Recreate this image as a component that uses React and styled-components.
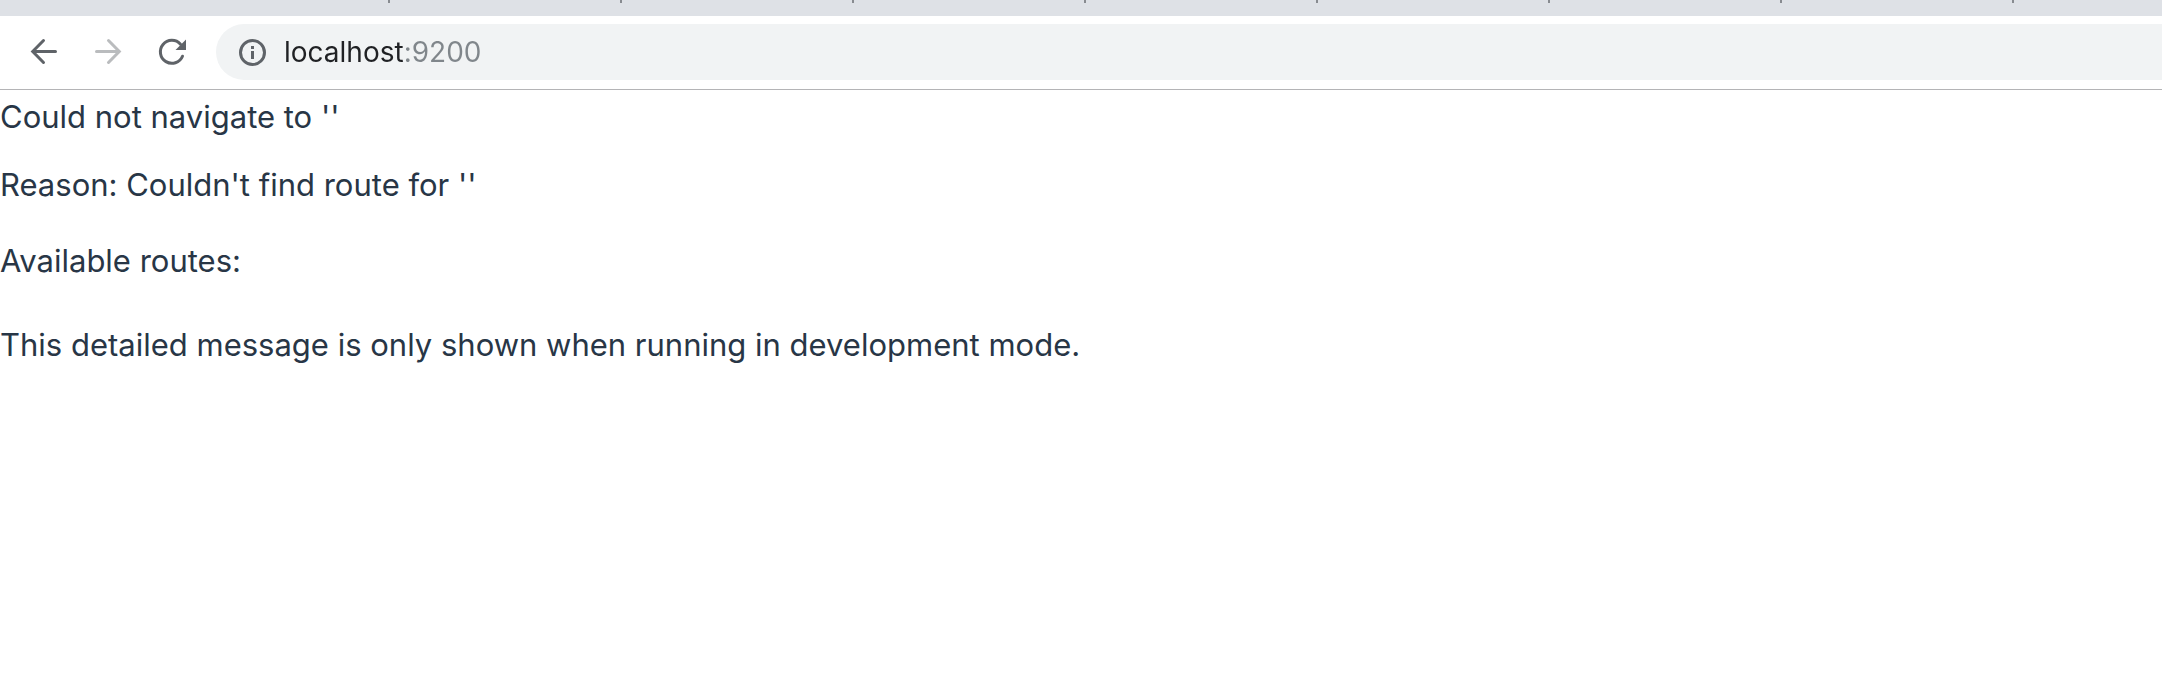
import React, { useState } from "react";
import styled, { createGlobalStyle } from "styled-components";

const GlobalStyle = createGlobalStyle`
  *, *::before, *::after { box-sizing: border-box; }
  body {
    margin: 0;
    background: #fff;
    font-family: Inter, "Liberation Sans", sans-serif;
    overflow-x: hidden;
  }
`;

const TabStrip = styled.div`
  display: flex;
  gap: 230px;
  height: 16px;
  padding-left: 388px;
  overflow: hidden;
  background: #dee1e6;
`;

const TabSeparator = styled.span`
  flex: none;
  width: 2px;
  height: 3px;
  background: #888b90;
`;

const Toolbar = styled.header`
  display: flex;
  align-items: center;
  gap: 8px;
  padding: 8px 0 9px 16px;
  border-bottom: 1px solid #b4b4b6;
`;

const NavButton = styled.button`
  display: flex;
  align-items: center;
  justify-content: center;
  width: 56px;
  height: 56px;
  padding: 0;
  border: 0;
  border-radius: 50%;
  background: none;
  color: ${(p) => (p.disabled ? "#babcbe" : "#5f6368")};
`;

const AddressBar = styled.label`
  display: flex;
  flex: 1;
  align-items: center;
  gap: 16px;
  height: 56px;
  margin-left: 8px;
  padding-left: 22px;
  border-radius: 28px 0 0 28px;
  background: #f1f3f4;
  color: #5f6368;
`;

const AddressInput = styled.input`
  flex: 1;
  min-width: 0;
  height: 40px;
  padding: 0;
  border: 0;
  outline: 0;
  font: 400 28px/40px Inter, "Liberation Sans", sans-serif;
  color: transparent;
  caret-color: #202124;
  background: linear-gradient(90deg, #202124 ${(p) => p.$hostWidth}px, #80868b ${(p) => p.$hostWidth}px);
  background-clip: text;
  -webkit-background-clip: text;
`;

const Page = styled.main`
  padding-top: 7px;
  color: #283646;
  font-size: 31px;
  line-height: 40px;
`;

const Message = styled.p`
  margin: 0 0 ${(p) => p.$after || 0}px;
`;

const BackIcon = () => (
  <svg width="32" height="32" viewBox="0 0 32 32" fill="none" stroke="currentColor" strokeWidth="3" strokeLinecap="round" aria-hidden="true">
    <path d="M27.5 15.5H5M15.5 4.5L4.7 15.5L15.5 26.5" />
  </svg>
);

const ForwardIcon = () => (
  <svg width="32" height="32" viewBox="0 0 32 32" fill="none" stroke="currentColor" strokeWidth="3" strokeLinecap="round" aria-hidden="true">
    <path d="M4.5 15.5H27M16.5 4.5L27.3 15.5L16.5 26.5" />
  </svg>
);

const ReloadIcon = () => (
  <svg width="32" height="32" viewBox="0 0 32 32" fill="none" aria-hidden="true">
    <path d="M26.5 20.2A11.5 11.5 0 1 1 24.5 8.2" stroke="currentColor" strokeWidth="3" strokeLinecap="round" />
    <path d="M30 3.5V14H19.5Z" fill="currentColor" />
  </svg>
);

const InfoIcon = () => (
  <svg width="30" height="30" viewBox="0 0 30 30" fill="none" aria-hidden="true">
    <circle cx="14.5" cy="15.5" r="12" stroke="currentColor" strokeWidth="3" />
    <path d="M13 9h3v3h-3zM13 14h3v8h-3z" fill="currentColor" />
  </svg>
);

const tabSeparators = Array.from({ length: 8 }, (_, i) => i);

export default function App() {
  const [address, setAddress] = useState("localhost:9200");
  return (
    <>
      <GlobalStyle />
      <TabStrip>
        {tabSeparators.map((i) => (
          <TabSeparator key={i} />
        ))}
      </TabStrip>
      <Toolbar>
        <NavButton type="button" aria-label="Back"><BackIcon /></NavButton>
        <NavButton type="button" aria-label="Forward" disabled><ForwardIcon /></NavButton>
        <NavButton type="button" aria-label="Reload"><ReloadIcon /></NavButton>
        <AddressBar>
          <InfoIcon />
          <AddressInput
            type="text"
            aria-label="Address"
            spellCheck={false}
            $hostWidth={120}
            value={address}
            onChange={(e) => setAddress(e.target.value)}
          />
        </AddressBar>
      </Toolbar>
      <Page>
        <Message $after={28}>Could not navigate to ''</Message>
        <Message $after={36}>Reason: Couldn't find route for ''</Message>
        <Message $after={44}>Available routes:</Message>
        <Message>This detailed message is only shown when running in development mode.</Message>
      </Page>
    </>
  );
}
